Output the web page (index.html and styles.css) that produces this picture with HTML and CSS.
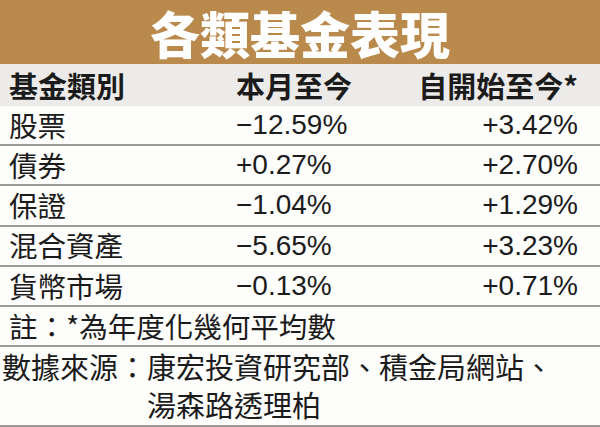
FILE: index.html
```html
<!DOCTYPE html>
<html lang="zh-Hant">
<head>
<meta charset="utf-8">
<link rel="stylesheet" href="styles.css">
</head>
<body>
<div class="card">
  <div class="title"><span>各類基金表現</span></div>
  <div class="row head">
    <div class="c1">基金類別</div>
    <div class="c2">本月至今</div>
    <div class="c3">自開始至今*</div>
  </div>
  <div class="row">
    <div class="c1">股票</div>
    <div class="c2 num">−12.59%</div>
    <div class="c3 num">+3.42%</div>
  </div>
  <div class="row">
    <div class="c1">債券</div>
    <div class="c2 num">+0.27%</div>
    <div class="c3 num">+2.70%</div>
  </div>
  <div class="row">
    <div class="c1">保證</div>
    <div class="c2 num">−1.04%</div>
    <div class="c3 num">+1.29%</div>
  </div>
  <div class="row">
    <div class="c1">混合資產</div>
    <div class="c2 num">−5.65%</div>
    <div class="c3 num">+3.23%</div>
  </div>
  <div class="row">
    <div class="c1">貨幣市場</div>
    <div class="c2 num">−0.13%</div>
    <div class="c3 num">+0.71%</div>
  </div>
  <div class="row note">註：*為年度化幾何平均數</div>
  <div class="source">
    <span class="label">數據來源：</span><span class="list">康宏投資研究部、積金局網站、<br>湯森路透理柏</span>
  </div>
</div>
</body>
</html>
```

FILE: styles.css
```css
html, body {
  margin: 0;
  padding: 0;
  background: #ffffff;
}

.card {
  width: 600px;
  height: 427px;
  overflow: hidden;
  font-family: "Noto Sans CJK TC", "Noto Sans CJK SC", sans-serif;
  color: #1b1b1b;
  background: #fdfdfc;
}

.title {
  display: flex;
  align-items: center;
  justify-content: center;
  height: 64px;
  background: #b98a4c;
  color: #ffffff;
  font-weight: 900;
  font-size: 50px;
  line-height: 1;
}

.row {
  display: grid;
  grid-template-columns: 227px 1fr auto;
  align-items: center;
  box-sizing: border-box;
  height: 40.2px;
  padding: 0 22px 0 9px;
  border-bottom: 2px solid #9c9a98;
  font-size: 28.5px;
  line-height: 1;
}

.row.head {
  height: 42px;
  background: #ecebe9;
  border-bottom: none;
  font-weight: 700;
  font-size: 29px;
}

.c3 {
  text-align: right;
}

.num {
  font-family: "Liberation Sans", Arial, sans-serif;
  font-size: 28px;
  color: #1b1b1b;
}

.row.note {
  display: flex;
  padding-left: 9px;
}

.source {
  display: flex;
  box-sizing: border-box;
  height: 80.6px;
  padding: 0 0 0 2px;
  border-bottom: 3px solid #9c9a98;
  font-size: 29px;
  line-height: 38px;
}

.label {
  flex: none;
}
```
